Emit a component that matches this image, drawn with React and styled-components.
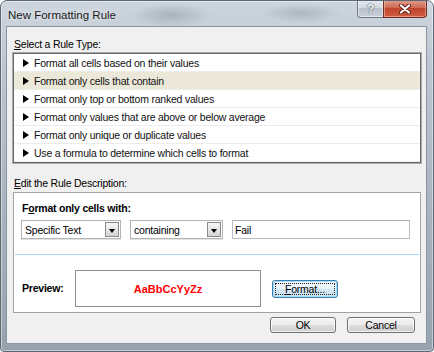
import React from 'react';
import styled, { createGlobalStyle, css } from 'styled-components';

const GlobalStyle = createGlobalStyle`
  html, body {
    margin: 0;
    padding: 0;
    background: #ffffff;
  }
  body {
    font-family: "Liberation Sans", Arial, sans-serif;
    font-size: 10.5px;
    letter-spacing: -0.22px;
    color: #000;
  }
`;

const Window = styled.div`
  width: 434px;
  height: 352px;
  box-sizing: border-box;
  border: 1px solid #5d6875;
  border-radius: 7px 7px 4px 4px;
  padding: 0 7px 8px 6px;
  display: flex;
  flex-direction: column;
  background:
    radial-gradient(ellipse 40px 12px at 170px 14px, rgba(110, 120, 135, 0.35), transparent),
    radial-gradient(ellipse 40px 10px at 300px 12px, rgba(110, 120, 135, 0.3), transparent),
    linear-gradient(180deg, #cdd5de 0%, #bcc5cf 20%, #a9b3bf 60%, #97a2af 100%);
  box-shadow: inset 0 0 0 1px rgba(255, 255, 255, 0.45);
  overflow: hidden;
`;

const TitleBar = styled.div`
  height: 26px;
  display: flex;
  align-items: flex-start;
  justify-content: space-between;
`;

const Caption = styled.div`
  margin: 7px 0 0 1px;
  font-size: 11.5px;
  letter-spacing: 0;
  line-height: 14px;
  color: #1b1b1b;
  text-shadow: 0 0 6px rgba(255, 255, 255, 0.9);
`;

const CaptionButtons = styled.div`
  display: flex;
  margin: -1px -1px 0 0;
`;

const HelpButton = styled.div`
  width: 26px;
  height: 18px;
  box-sizing: border-box;
  border: 1px solid #6c7784;
  border-top: none;
  border-right: none;
  border-bottom-left-radius: 4px;
  background: linear-gradient(180deg, #e8ecf1 0%, #d3d9e0 45%, #b9c2cc 50%, #c8d0d9 100%);
  box-shadow: inset 0 0 0 1px rgba(255, 255, 255, 0.5);
  display: flex;
  align-items: center;
  justify-content: center;
  font-weight: bold;
  font-size: 12px;
  color: #f4f6f8;
  text-shadow: 0 0 1px #4a5562, 0 0 2px #4a5562;
`;

const CloseButton = styled.div`
  width: 44px;
  height: 18px;
  box-sizing: border-box;
  border: 1px solid #6e2a1f;
  border-top: none;
  border-bottom-right-radius: 4px;
  background: linear-gradient(180deg, #e0a090 0%, #cf6a52 45%, #c0452e 50%, #cf5c40 100%);
  box-shadow: inset 0 0 0 1px rgba(255, 220, 210, 0.45);
  display: flex;
  align-items: center;
  justify-content: center;
`;

const Client = styled.div`
  flex: 1;
  background: #f0f0f0;
  box-shadow: 0 0 0 1px #8a95a2;
  padding: 11px 5px 10px 6px;
  display: flex;
  flex-direction: column;
`;

const GroupLabel = styled.div`
  line-height: 13px;
  margin: ${p => (p.$spaced ? '14px' : '0')} 0 2px 1px;
  color: #000;
`;

const RuleList = styled.div`
  height: 110px;
  box-sizing: border-box;
  border: 1px solid #6b6b6b;
  box-shadow: 0 0 0 1px #a8a8a8;
  background: #fff;
  display: flex;
  flex-direction: column;
`;

const RuleRow = styled.div`
  height: 18px;
  box-sizing: border-box;
  border-bottom: 1px solid #ececec;
  padding-left: 9px;
  display: flex;
  align-items: center;
  gap: 5px;
  background: ${p => (p.$selected ? '#ebe8da' : '#fff')};
  color: #111;
`;

const Arrow = styled.span`
  width: 0;
  height: 0;
  border-top: 4px solid transparent;
  border-bottom: 4px solid transparent;
  border-left: 6px solid #000;
`;

const DescBox = styled.div`
  height: 121px;
  box-sizing: border-box;
  border: 1px solid #a3a3a3;
  background: #fff;
  padding-top: 9px;
  display: flex;
  flex-direction: column;
`;

const CriteriaSection = styled.div`
  padding: 0 7px;
  display: flex;
  flex-direction: column;
  gap: 5px;
`;

const BoldLabel = styled.div`
  font-weight: bold;
  line-height: 13px;
  margin-left: 1px;
  width: ${p => (p.$width ? `${p.$width}px` : 'auto')};
  flex: none;
`;

const FieldRow = styled.div`
  display: flex;
  gap: 9px;
`;

const Combo = styled.div`
  width: ${p => p.$width}px;
  height: 19px;
  box-sizing: border-box;
  border: 1px solid #b4b4b4;
  box-shadow: 0 1px 0 #e3e3e3;
  background: #fff;
  display: flex;
  align-items: center;
  justify-content: space-between;
  padding: 0 1px 0 3px;
`;

const DropButton = styled.div`
  width: 14px;
  height: 15px;
  box-sizing: border-box;
  border: 1px solid #8a8a8a;
  background: linear-gradient(180deg, #f6f6f6 0%, #e4e4e4 55%, #d4d4d4 100%);
  display: flex;
  align-items: center;
  justify-content: center;
`;

const DropArrow = styled.span`
  width: 0;
  height: 0;
  margin-top: 2px;
  border-left: 3.5px solid transparent;
  border-right: 3.5px solid transparent;
  border-top: 4px solid #000;
`;

const TextField = styled.div`
  width: 178px;
  height: 19px;
  box-sizing: border-box;
  border: 1px solid #b8bcc4;
  border-top-color: #abadb3;
  background: #fff;
  display: flex;
  align-items: center;
  padding-left: 2px;
`;

const Divider = styled.div`
  height: 1px;
  margin: 15px 1px 15px 1px;
  background: #a9d2f3;
`;

const PreviewRow = styled.div`
  display: flex;
  align-items: center;
  padding-left: 7px;
`;

const PreviewSample = styled.div`
  width: 186px;
  height: 37px;
  box-sizing: border-box;
  border: 1px solid #8f8f8f;
  display: flex;
  align-items: center;
  justify-content: center;
  font-weight: bold;
  font-size: 11px;
  letter-spacing: 0;
  color: #ff0000;
  margin-right: 11px;
`;

const PushButton = styled.div`
  position: relative;
  width: ${p => p.$width}px;
  height: ${p => p.$height}px;
  box-sizing: border-box;
  border: 1px solid #707070;
  border-radius: 3px;
  background: linear-gradient(180deg, #f4f4f4 0%, #ebebeb 48%, #dddddd 52%, #cfcfcf 100%);
  box-shadow: inset 0 0 0 1px rgba(255, 255, 255, 0.7);
  display: flex;
  align-items: center;
  justify-content: center;
  color: #000;
  ${p =>
    p.$focused &&
    css`
      border-color: #3c7fb1;
      box-shadow: inset 0 0 0 1px #a6dcf7;
      background: linear-gradient(180deg, #f6fbfe 0%, #e8f3fa 48%, #d6e8f5 52%, #c9e1f1 100%);
      &::after {
        content: '';
        position: absolute;
        inset: 2px;
        border: 1px dotted #222;
        border-radius: 1px;
      }
    `}
`;

const Footer = styled.div`
  display: flex;
  justify-content: flex-end;
  gap: 11px;
  margin-top: 4px;
  padding-right: 6px;
`;

const rules = [
  'Format all cells based on their values',
  'Format only cells that contain',
  'Format only top or bottom ranked values',
  'Format only values that are above or below average',
  'Format only unique or duplicate values',
  'Use a formula to determine which cells to format',
];

const App = () => {
  return (
    <>
      <GlobalStyle />
      <Window>
        <TitleBar>
          <Caption>New Formatting Rule</Caption>
          <CaptionButtons>
            <HelpButton>?</HelpButton>
            <CloseButton>
              <svg width="12" height="10" viewBox="0 0 12 10">
                <path d="M2 1.5 L10 8.5 M10 1.5 L2 8.5" stroke="#5a1d14" strokeWidth="4" strokeLinecap="round" />
                <path d="M2 1.5 L10 8.5 M10 1.5 L2 8.5" stroke="#ffffff" strokeWidth="2.2" strokeLinecap="round" />
              </svg>
            </CloseButton>
          </CaptionButtons>
        </TitleBar>
        <Client>
          <GroupLabel><u>S</u>elect a Rule Type:</GroupLabel>
          <RuleList>
            {rules.map((rule, i) => (
              <RuleRow key={rule} $selected={i === 1}>
                <Arrow />
                {rule}
              </RuleRow>
            ))}
          </RuleList>
          <GroupLabel $spaced><u>E</u>dit the Rule Description:</GroupLabel>
          <DescBox>
            <CriteriaSection>
              <BoldLabel>F<u>o</u>rmat only cells with:</BoldLabel>
              <FieldRow>
                <Combo $width={100}>
                  Specific Text
                  <DropButton><DropArrow /></DropButton>
                </Combo>
                <Combo $width={93}>
                  containing
                  <DropButton><DropArrow /></DropButton>
                </Combo>
                <TextField>Fail</TextField>
              </FieldRow>
            </CriteriaSection>
            <Divider />
            <PreviewRow>
              <BoldLabel $width={53}>Preview:</BoldLabel>
              <PreviewSample>AaBbCcYyZz</PreviewSample>
              <PushButton $focused $width={66} $height={18}><span><u>F</u>ormat...</span></PushButton>
            </PreviewRow>
          </DescBox>
          <Footer>
            <PushButton $width={66} $height={16}>OK</PushButton>
            <PushButton $width={68} $height={16}>Cancel</PushButton>
          </Footer>
        </Client>
      </Window>
    </>
  );
};

export default App;
